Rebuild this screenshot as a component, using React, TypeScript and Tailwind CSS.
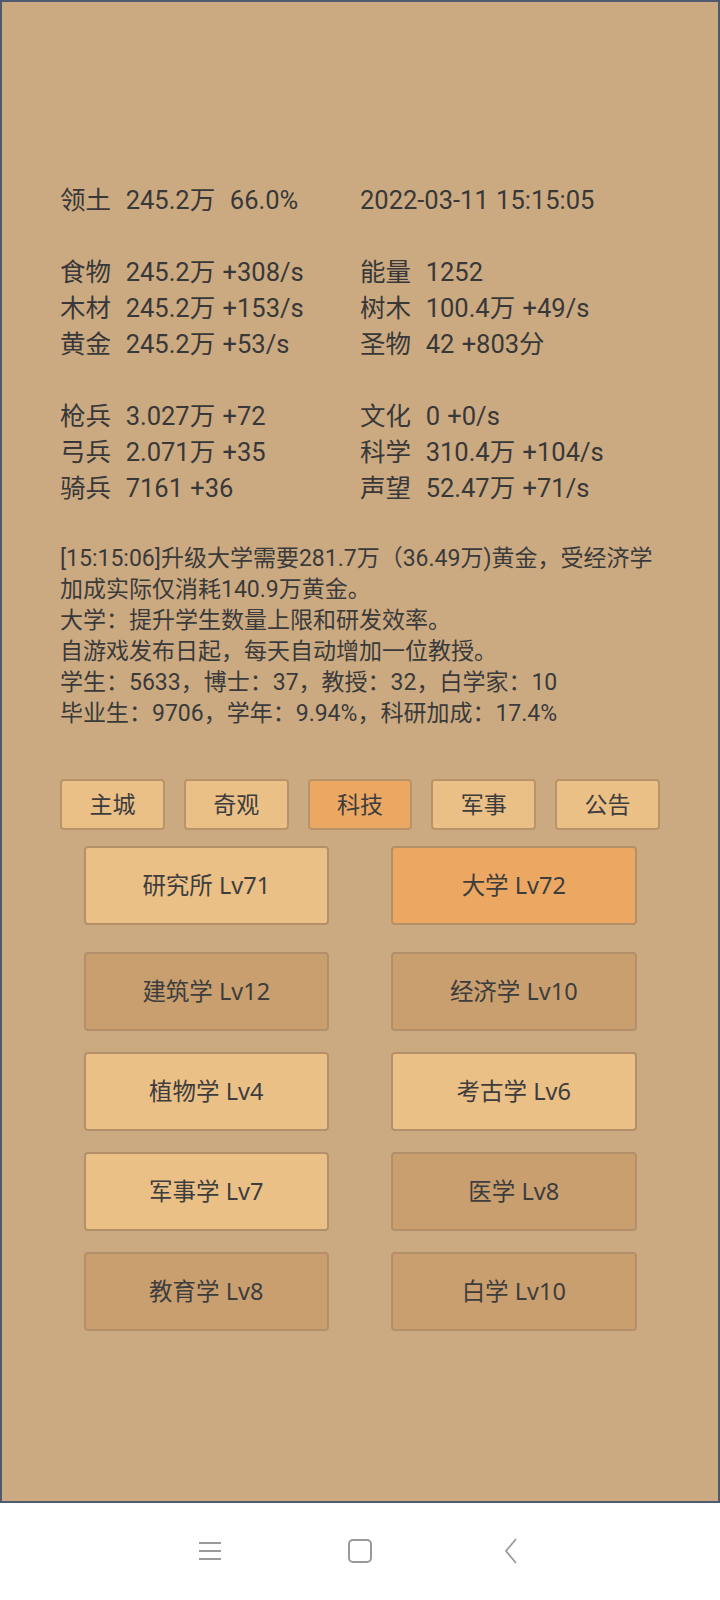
import React from 'react';

type Tone = 'light' | 'active' | 'dark';

const toneClass: Record<Tone, string> = {
  light: 'bg-[#ebc087]',
  active: 'bg-[#eca862]',
  dark: 'bg-[#c99f6f]',
};

const stats: [string, string][] = [
  ['领土  245.2万  66.0%', '2022-03-11 15:15:05'],
  ['', ''],
  ['食物  245.2万 +308/s', '能量  1252'],
  ['木材  245.2万 +153/s', '树木  100.4万 +49/s'],
  ['黄金  245.2万 +53/s', '圣物  42 +803分'],
  ['', ''],
  ['枪兵  3.027万 +72', '文化  0 +0/s'],
  ['弓兵  2.071万 +35', '科学  310.4万 +104/s'],
  ['骑兵  7161 +36', '声望  52.47万 +71/s'],
];

const notes = [
  '[15:15:06]升级大学需要281.7万（36.49万)黄金，受经济学',
  '加成实际仅消耗140.9万黄金。',
  '大学：提升学生数量上限和研发效率。',
  '自游戏发布日起，每天自动增加一位教授。',
  '学生：5633，博士：37，教授：32，白学家：10',
  '毕业生：9706，学年：9.94%，科研加成：17.4%',
];

const tabs: { name: string; tone: Tone }[] = [
  { name: '主城', tone: 'light' },
  { name: '奇观', tone: 'light' },
  { name: '科技', tone: 'active' },
  { name: '军事', tone: 'light' },
  { name: '公告', tone: 'light' },
];

const buildings: { name: string; tone: Tone }[][] = [
  [
    { name: '研究所 Lv71', tone: 'light' },
    { name: '大学 Lv72', tone: 'active' },
  ],
  [
    { name: '建筑学 Lv12', tone: 'dark' },
    { name: '经济学 Lv10', tone: 'dark' },
  ],
  [
    { name: '植物学 Lv4', tone: 'light' },
    { name: '考古学 Lv6', tone: 'light' },
  ],
  [
    { name: '军事学 Lv7', tone: 'light' },
    { name: '医学 Lv8', tone: 'dark' },
  ],
  [
    { name: '教育学 Lv8', tone: 'dark' },
    { name: '白学 Lv10', tone: 'dark' },
  ],
];

const btnFont = { fontFamily: '"Noto Sans", "Noto Sans CJK SC", sans-serif' };

export default function App() {
  return (
    <div
      className="w-[720px] h-[1600px] bg-white flex flex-col text-[#383838]"
      style={{ fontFamily: 'Roboto, "Noto Sans CJK SC", sans-serif' }}
    >
      {/* Game panel */}
      <div className="h-[1503px] shrink-0 bg-[#cbaa82] border-2 border-[#4f5a6e] pt-[180px] px-[58px]">
        {/* Resources */}
        <div className="grid grid-cols-[300px_300px] text-[25.5px] leading-[36px] whitespace-pre [word-spacing:1px]">
          {stats.map(([l, r], i) => (
            <React.Fragment key={i}>
              <div className="h-[36px]">{l}</div>
              <div className="h-[36px]">{r}</div>
            </React.Fragment>
          ))}
        </div>

        {/* Log */}
        <div className="mt-[37px] text-[23px] leading-[31px] text-[#3a3a3a]">
          {notes.map((n) => (
            <div key={n} className="whitespace-nowrap">{n}</div>
          ))}
        </div>

        {/* Tabs */}
        <div className="mt-[50px] grid grid-cols-5 gap-[19px] w-[600px]" style={btnFont}>
          {tabs.map((t) => (
            <button
              key={t.name}
              className={`h-[51px] rounded-[4px] border-2 border-[#b9936a] text-[23px] text-[#3d3d3d] flex items-center justify-center ${toneClass[t.tone]}`}
            >
              {t.name}
            </button>
          ))}
        </div>

        {/* Buildings */}
        <div className="mt-[16px] w-[553px] mx-auto flex flex-col gap-[21px]" style={btnFont}>
          {buildings.map((row, i) => (
            <div key={i} className={`grid grid-cols-2 gap-x-[62px] ${i === 0 ? 'mb-[6px]' : ''}`}>
              {row.map((b) => (
                <button
                  key={b.name}
                  className={`h-[79px] rounded-[4px] border-2 border-[#b3906a] text-[23.5px] text-[#3d3d3d] flex items-center justify-center ${toneClass[b.tone]}`}
                >
                  {b.name}
                </button>
              ))}
            </div>
          ))}
        </div>
      </div>

      {/* System nav bar */}
      <div className="flex-1 flex items-center justify-center gap-[126px] pb-[2px]">
        <svg width="24" height="24" viewBox="0 0 24 24" fill="none" stroke="#999" strokeWidth="2">
          <path d="M1 4h22M1 12h22M1 20h22" />
        </svg>
        <svg width="24" height="24" viewBox="0 0 24 24" fill="none" stroke="#999" strokeWidth="2">
          <rect x="1" y="1" width="22" height="22" rx="4" />
        </svg>
        <svg width="24" height="26" viewBox="0 0 24 26" fill="none" stroke="#999" strokeWidth="1.8">
          <path d="M18 1L8 13l10 12" />
        </svg>
      </div>
    </div>
  );
}
